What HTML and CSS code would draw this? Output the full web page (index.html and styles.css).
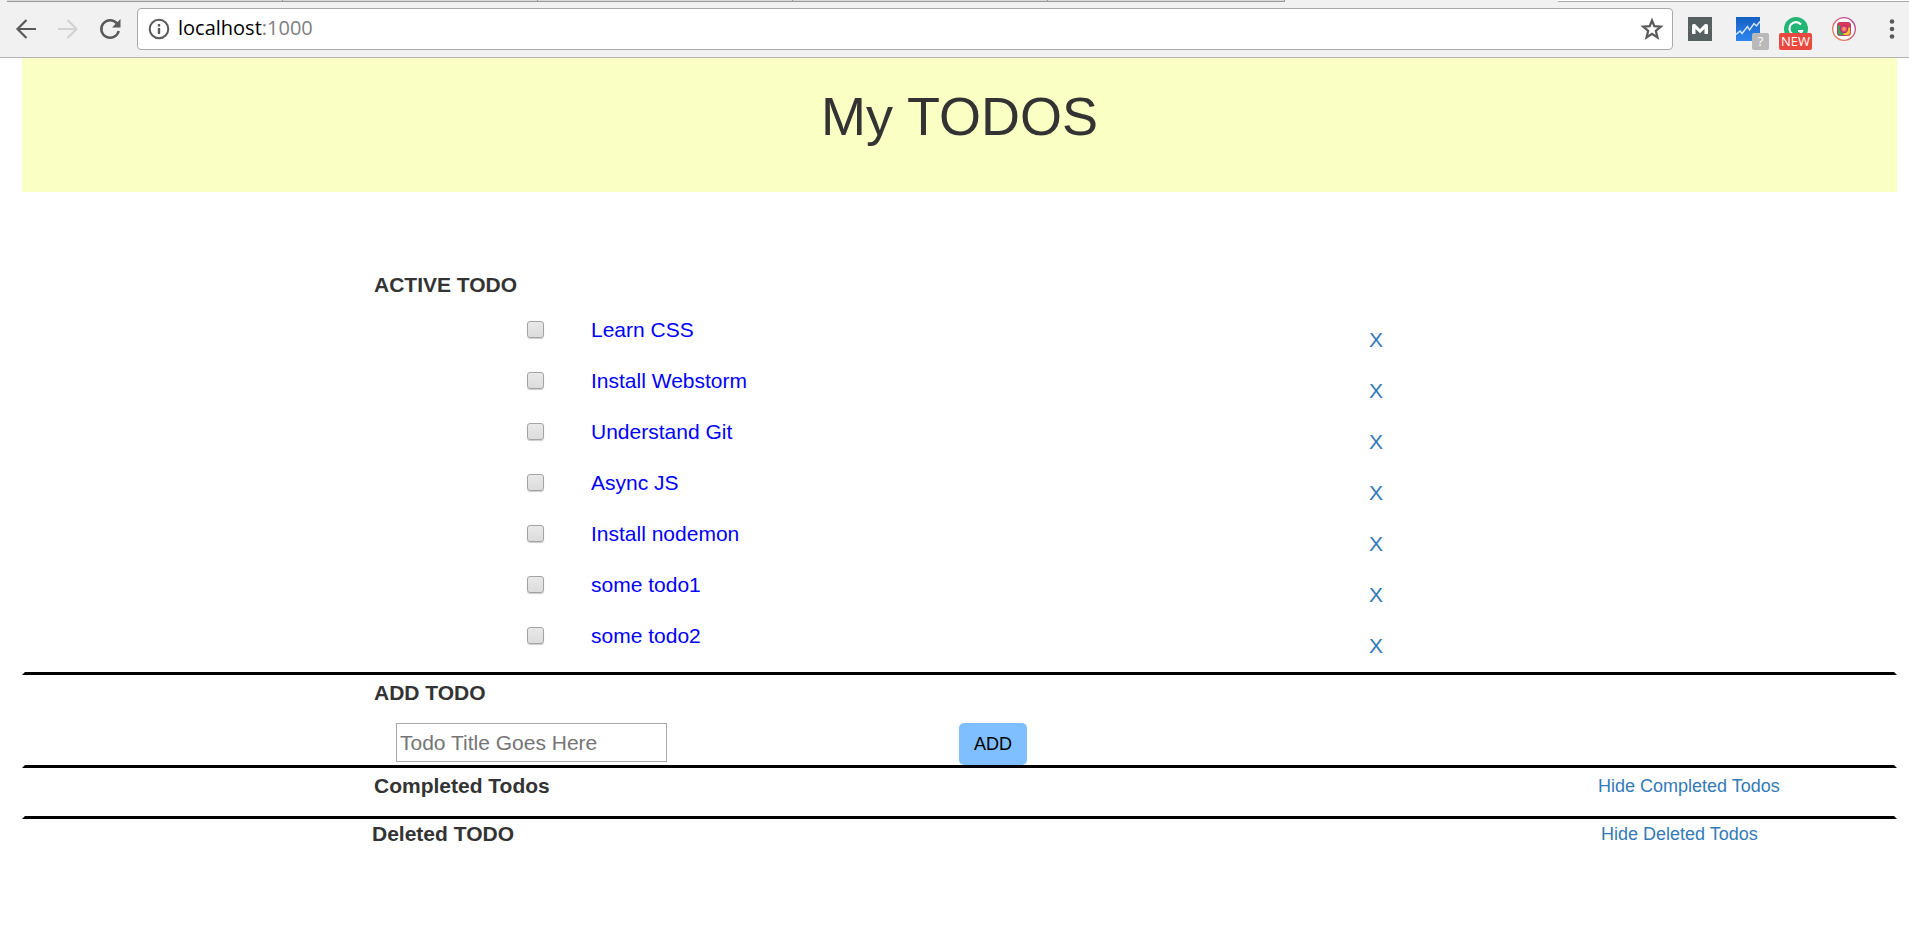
FILE: index.html
```html
<!DOCTYPE html>
<html lang="en">
<head>
<meta charset="utf-8">
<title>My TODOS</title>
<link rel="stylesheet" href="styles.css">
</head>
<body>
<div class="browser">
  <div class="tabstrip"><span class="tab"></span><span class="tab"></span><span class="tab"></span><span class="tab"></span><span class="tab"></span><span class="tab-gap"></span><span class="tab-end"></span></div>
  <div class="toolbar">
    <div class="nav">
      <button class="tool" aria-label="Back"><svg width="24" height="24" viewBox="0 0 24 24" fill="none" stroke="#5a5a5a" stroke-width="2.2"><path d="M22 12H4M12.500 3L3.500 12L12.500 21"/></svg></button>
      <button class="tool" aria-label="Forward" disabled><svg width="24" height="24" viewBox="0 0 24 24" fill="none" stroke="#d2d2d2" stroke-width="2.2"><path d="M2 12H20M11.500 3L20.500 12L11.500 21"/></svg></button>
      <button class="tool" aria-label="Reload"><svg width="24" height="24" viewBox="0 0 24 24"><path d="M19 6.500A8.800 8.800 0 1 0 20.700 14" fill="none" stroke="#5a5a5a" stroke-width="2.5"/><path d="M22.500 2V10.500H14Z" fill="#5a5a5a"/></svg></button>
    </div>
    <div class="address">
      <svg width="22" height="22" viewBox="0 0 22 22"><circle cx="11" cy="11" r="9.300" fill="none" stroke="#5a5a5a" stroke-width="2"/><path d="M9.800 6h2.400v2.400H9.800zM9.800 10h2.400v6H9.800z" fill="#5a5a5a"/></svg>
      <span class="url">localhost<span class="port">:1000</span></span>
      <button class="tool" aria-label="Bookmark this page"><svg width="24" height="24" viewBox="0 0 24 24"><path d="M12 3.500L14.300 9.200 20.800 9.600 15.800 13.800 17.500 20.500 12 16.800 6.500 20.500 8.200 13.800 3.200 9.600 9.700 9.200z" fill="none" stroke="#5a5a5a" stroke-width="2.2"/></svg></button>
    </div>
    <div class="extensions">
      <button class="ext" aria-label="Mail"><svg width="24" height="24" viewBox="0 0 24 24"><path d="M0 0h24v24H0z" fill="#566060"/><path d="M4 17V9Q4 7 5.500 7H7l5 5 5-5h1.500Q20 7 20 9v8h-3.500v-5L12 16.200 7.500 12v5z" fill="#fff"/></svg></button>
      <button class="ext" aria-label="Analytics"><svg width="24" height="24" viewBox="0 0 24 24"><defs><linearGradient id="blue" x1="0" y1="0" x2="0" y2="1"><stop offset="0" stop-color="#1560c4"/><stop offset="1" stop-color="#2e86ee"/></linearGradient></defs><path d="M0 0h24v24H0z" fill="url(#blue)"/><path d="M0 17.500L4 14l2 2.500 5.500-7 2 3.500L18 6.500l2.500 2.500L24 4.500" fill="none" stroke="#d5e9ff" stroke-width="1.4"/></svg><span class="badge badge-gray">?</span></button>
      <button class="ext" aria-label="Grammar"><svg width="24" height="24" viewBox="0 0 24 24"><circle cx="12" cy="12" r="12" fill="#23b574"/><path d="M17 7.500A6.500 6.500 0 1 0 18 14h-4" fill="none" stroke="#fff" stroke-width="2.2"/></svg><span class="badge badge-red">NEW</span></button>
      <button class="ext" aria-label="Photos"><svg width="24" height="24" viewBox="0 0 24 24"><defs><linearGradient id="ring" x1="1" y1="0" x2="0" y2="1"><stop offset="0" stop-color="#b03a9c"/><stop offset="1" stop-color="#f0884a"/></linearGradient><clipPath id="body"><rect x="5" y="5" width="14" height="14" rx="3.5"/></clipPath></defs><circle cx="12" cy="12" r="11.300" fill="#fff" stroke="url(#ring)" stroke-width="1.300"/><g clip-path="url(#body)"><path d="M5 5h14v14H5z" fill="#d93c57"/><path d="M5 7l7 5 0 7H5z" fill="#35a853"/><path d="M19 10v9h-8l2-7z" fill="#fbc62f"/></g><circle cx="12" cy="12" r="3.600" fill="#e2557c" stroke="#b72d70" stroke-width="1.2"/><circle cx="12" cy="12" r="1.700" fill="#f3a24f"/><rect x="5.500" y="5.500" width="13" height="13" rx="3.300" fill="none" stroke="#c63a6e"/></svg></button>
      <button class="menu" aria-label="Menu"><svg width="6" height="22" viewBox="0 0 6 22" fill="#5a5a5a"><circle cx="3" cy="3.500" r="2.300"/><circle cx="3" cy="11" r="2.300"/><circle cx="3" cy="18.500" r="2.300"/></svg></button>
    </div>
  </div>
</div>
<main class="page">
  <header class="banner"><h1>My TODOS</h1></header>
  <section class="panel active">
    <h2 class="heading">ACTIVE TODO</h2>
    <ul class="todos">
      <li class="todo"><input type="checkbox" id="t1"><label for="t1">Learn CSS</label><a class="remove" href="#">X</a></li>
      <li class="todo"><input type="checkbox" id="t2"><label for="t2">Install Webstorm</label><a class="remove" href="#">X</a></li>
      <li class="todo"><input type="checkbox" id="t3"><label for="t3">Understand Git</label><a class="remove" href="#">X</a></li>
      <li class="todo"><input type="checkbox" id="t4"><label for="t4">Async JS</label><a class="remove" href="#">X</a></li>
      <li class="todo"><input type="checkbox" id="t5"><label for="t5">Install nodemon</label><a class="remove" href="#">X</a></li>
      <li class="todo"><input type="checkbox" id="t6"><label for="t6">some todo1</label><a class="remove" href="#">X</a></li>
      <li class="todo"><input type="checkbox" id="t7"><label for="t7">some todo2</label><a class="remove" href="#">X</a></li>
    </ul>
  </section>
  <section class="panel add">
    <h2 class="heading">ADD TODO</h2>
    <form class="add-form">
      <input class="title-input" type="text" placeholder="Todo Title Goes Here" aria-label="Todo title">
      <button class="add-button" type="button">ADD</button>
    </form>
  </section>
  <section class="panel completed">
    <h2 class="heading">Completed Todos</h2>
    <a class="toggle" href="#">Hide Completed Todos</a>
  </section>
  <section class="deleted">
    <h2 class="heading">Deleted TODO</h2>
    <a class="toggle" href="#">Hide Deleted Todos</a>
  </section>
</main>
</body>
</html>
```
FILE: styles.css
```css
* { box-sizing: border-box; }
body {
  margin: 0;
  background: #fff;
  color: #333;
  font: 21px/30px "Liberation Sans", Arial, sans-serif;
}
h1, h2, ul { margin: 0; padding: 0; }
button { font-family: inherit; border: 0; background: none; padding: 0; }
svg { display: block; }
a { color: #337ab7; text-decoration: none; }

.browser { background: #f1f1f1; border-bottom: 1px solid #b4b4b4; }
.tabstrip { display: flex; height: 2px; padding-left: 7px; }
.tab { flex: 0 0 255px; background: #d9d9d9; border-bottom: 1px solid #999; border-right: 1px solid #999; }
.tab:first-child { flex-basis: 276px; }
.tab:nth-child(5) { flex-basis: 237px; }
.tab-gap { flex: 0 0 273px; }
.tab-end { flex: 1; background: #fff; border-bottom: 1px solid #aaa; }
.toolbar { display: flex; align-items: center; height: 55px; padding: 0 14px 1px 0; }
.nav { display: flex; gap: 18px; padding: 0 15px 0 14px; }
.address {
  flex: 1;
  display: flex;
  align-items: center;
  height: 42px;
  padding: 0 8px 0 10px;
  background: #fff;
  border: 1px solid #a9a9a9;
  border-radius: 4px;
}
.url { flex: 1; padding: 0 0 2px 8px; color: #000; font: 20px/28px "Open Sans", "Noto Sans", sans-serif; }
.port { color: #808080; }
.extensions { display: flex; align-items: center; gap: 24px; padding-left: 15px; }
.ext { position: relative; }
.badge { position: absolute; color: #fff; font: 13px/17px "Open Sans", sans-serif; border-radius: 2px; text-align: center; }
.badge-gray { left: 16px; top: 16px; width: 17px; background: #b9b9b9; }
.badge-red { left: -5px; top: 16px; width: 33px; background: #e9493f; }
.menu { padding-left: 9px; }

.page { padding: 0 12px 0 22px; }
.banner { background: #faffc3; padding: 28px 0 46px; text-align: center; }
.banner h1 { font-size: 54px; line-height: 60px; font-weight: 400; }
.heading { font-size: 21px; line-height: 30px; font-weight: 700; }
.panel { border: 3px solid transparent; border-bottom-color: #000; border-top: 0; padding-left: 349px; }
.active { padding-top: 78px; }
.todos { list-style: none; padding-top: 15px; }
.todo { display: flex; height: 51px; padding-left: 153px; }
.todo label { flex: 0 0 778px; margin-left: 47px; color: #00f; }
.todo input {
  appearance: none;
  width: 17px;
  height: 17px;
  margin: 6px 0;
  border: 1px solid #a3a3a3;
  border-radius: 3px;
  background: linear-gradient(#e9e9e9, #dcdcdc);
  box-shadow: 0 1px 1px #ccc;
}
.remove { padding-top: 10px; }
.add { padding-top: 3px; }
.add-form { display: flex; align-items: flex-start; padding: 15px 0 0 22px; }
.title-input {
  width: 271px;
  height: 39px;
  margin-right: 292px;
  padding: 2px 3px;
  border: 1px solid #a9a9a9;
  font: inherit;
}
.title-input::placeholder { color: #757575; opacity: 1; }
.add-button { width: 68px; height: 42px; border-radius: 5px; background: #80bfff; color: #000; font-size: 18px; }
.completed, .deleted { display: grid; grid-template-columns: 1fr 296px; }
.completed { padding-top: 3px; padding-bottom: 15px; }
.deleted { padding-left: 350px; }
.toggle { font-size: 18px; line-height: 30px; }
```
